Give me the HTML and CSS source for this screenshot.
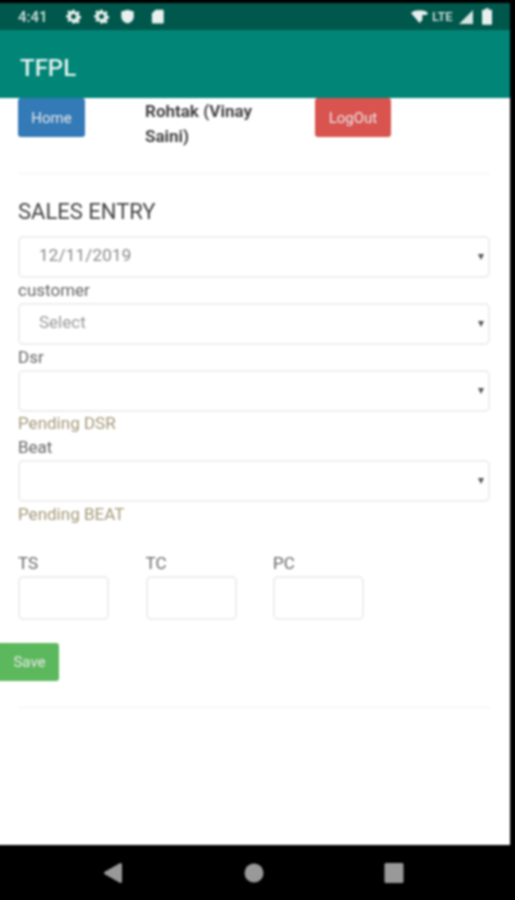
FILE: index.html
```html
<!DOCTYPE html>
<html lang="en">
<head>
    <meta charset="UTF-8">
    <meta name="viewport" content="width=device-width, initial-scale=1.0">
    <title>TFPL</title>
    <link rel="stylesheet" href="styles.css">
</head>
<body>
    <div class="phone">
        <div class="status-bar">
            <span class="status-time">4:41</span>
            <!-- notification icons -->
            <svg class="status-icon gear-one" viewBox="0 0 24 24"><path fill-rule="evenodd" d="M10 1h4l.6 3.2 1.9.8 2.7-1.8 2.8 2.8-1.8 2.7.8 1.9 3.2.6v4l-3.2.6-.8 1.9 1.8 2.7-2.8 2.8-2.7-1.8-1.9.8L14 23h-4l-.6-3.2-1.9-.8-2.7 1.8-2.8-2.8 1.8-2.7-.8-1.9L-.2 14v-4L3 9.4l.8-1.9L2 4.8 4.8 2l2.7 1.8 1.9-.8zM12 8a4 4 0 1 0 0 8 4 4 0 0 0 0-8z"/></svg>
            <svg class="status-icon gear-two" viewBox="0 0 24 24"><path fill-rule="evenodd" d="M10 1h4l.6 3.2 1.9.8 2.7-1.8 2.8 2.8-1.8 2.7.8 1.9 3.2.6v4l-3.2.6-.8 1.9 1.8 2.7-2.8 2.8-2.7-1.8-1.9.8L14 23h-4l-.6-3.2-1.9-.8-2.7 1.8-2.8-2.8 1.8-2.7-.8-1.9L-.2 14v-4L3 9.4l.8-1.9L2 4.8 4.8 2l2.7 1.8 1.9-.8zM12 8a4 4 0 1 0 0 8 4 4 0 0 0 0-8z"/></svg>
            <svg class="status-icon shield" viewBox="0 0 24 24"><path d="M12 1l10 3v8c0 6-4 9.500-10 11C6 21.500 2 18 2 12V4z"/></svg>
            <svg class="status-icon sdcard" viewBox="0 0 24 24"><path d="M9 1h11a2 2 0 0 1 2 2v18a2 2 0 0 1-2 2H5a2 2 0 0 1-2-2V7z"/></svg>
            <span class="status-right">
                <svg class="wifi" viewBox="0 0 24 18"><path d="M0 4C3 1 7 0 12 0s9 1 12 4l-2 3h-6v7l-4 4z"/></svg>
                <span class="lte">LTE</span>
                <svg class="signal" viewBox="0 0 14 14"><path d="M14 0v14H0z"/></svg>
                <svg class="battery" viewBox="0 0 11 18"><path d="M3.500 0h4v1.500H10a1 1 0 0 1 1 1V17a1 1 0 0 1-1 1H1a1 1 0 0 1-1-1V2.500a1 1 0 0 1 1-1h2.500z"/></svg>
            </span>
        </div>
        <div class="app-bar">TFPL</div>

        <div class="content">
            <div class="top-row">
                <div><button class="btn btn-home">Home</button></div>
                <div class="user-name">Rohtak (Vinay Saini)</div>
                <div><button class="btn btn-logout">LogOut</button></div>
            </div>
            <hr class="rule rule-top">

            <h3 class="page-title">SALES ENTRY</h3>

            <div class="select-box"><select class="field-select date-select"><option>12/11/2019</option></select></div>
            <label class="field-label">customer</label>
            <div class="select-box"><select class="field-select"><option>Select</option></select></div>
            <label class="field-label">Dsr</label>
            <div class="select-box"><select class="field-select"><option></option></select></div>
            <p class="pending">Pending DSR</p>
            <label class="field-label">Beat</label>
            <div class="select-box"><select class="field-select"><option></option></select></div>
            <p class="pending pending-beat">Pending BEAT</p>

            <div class="count-row">
                <div class="count-col">
                    <label class="field-label">TS</label>
                    <input type="text" class="count-input">
                </div>
                <div class="count-col">
                    <label class="field-label">TC</label>
                    <input type="text" class="count-input">
                </div>
                <div class="count-col">
                    <label class="field-label">PC</label>
                    <input type="text" class="count-input">
                </div>
            </div>

            <button class="btn btn-save">Save</button>
            <hr class="rule rule-bottom">
        </div>

        <div class="nav-bar">
            <svg class="nav-icon nav-back" viewBox="0 0 20 22"><path d="M17.500 2.500v17L2.500 11z"/></svg>
            <svg class="nav-icon" viewBox="0 0 20 22"><circle cx="10" cy="11" r="9.500"/></svg>
            <svg class="nav-icon" viewBox="0 0 20 22"><rect x="0.500" y="1" width="19" height="20" rx="1.500"/></svg>
        </div>
    </div>
</body>
</html>
```

FILE: styles.css
```css
body {
    margin: 0;
    background-color: #000;
    font-family: Roboto, "Liberation Sans", sans-serif;
}

.phone {
    width: 515px;
    height: 900px;
    display: flex;
    flex-direction: column;
    filter: blur(0.8px);
}

/* status bar */
.status-bar {
    width: 510px;
    height: 27px;
    margin-top: 3px;
    flex-shrink: 0;
    display: flex;
    align-items: center;
    background-color: #00574b;
    box-shadow: -6px 0 0 #00574b; /* keeps the blur from darkening the left edge */
    color: #d5e4e1;
    box-sizing: border-box;
    padding: 0 18px;
}

.status-time {
    font-size: 15px;
    font-weight: 500;
    width: 48px;
}

.status-icon {
    width: 15px;
    height: 15px;
    fill: #e8f0ee;
}

.gear-two {
    margin-left: 13px;
}

.shield {
    margin-left: 11px;
}

.sdcard {
    margin-left: 15px;
}

.status-right {
    margin-left: auto;
    display: flex;
    align-items: center;
}

.wifi {
    width: 17px;
    height: 13px;
    fill: #e8f0ee;
}

.lte {
    font-size: 13px;
    font-weight: 500;
    margin-left: 4px;
    width: 26px;
}

.signal {
    width: 14px;
    height: 14px;
    fill: #d5e4e1;
    margin-left: 1px;
}

.battery {
    width: 10px;
    height: 17px;
    fill: #e8f0ee;
    margin-left: 9px;
}

/* app bar */
.app-bar {
    width: 510px;
    height: 68px;
    flex-shrink: 0;
    background-color: #008577;
    box-shadow: -6px 0 0 #008577;
    color: #e6f2f0;
    font-size: 24px;
    font-weight: 500;
    line-height: 76px;
    box-sizing: border-box;
    padding-left: 20px;
}

/* page */
.content {
    width: 510px;
    height: 747px;
    flex-shrink: 0;
    background-color: #fff;
    box-shadow: -6px 0 0 #fff;
    box-sizing: border-box;
    padding: 0 20px 0 18px;
    color: #555;
    font-size: 17px;
}

.top-row {
    display: grid;
    grid-template-columns: 127px 170px 1fr;
}

.btn {
    border: none;
    border-radius: 3px;
    color: #e8e8e8;
    font-family: inherit;
    font-size: 15px;
    display: block;
    padding: 0;
}

.btn-home {
    width: 67px;
    height: 39px;
    background-color: #337ab7;
}

.btn-logout {
    width: 76px;
    height: 39px;
    background-color: #d9534f;
}

.user-name {
    color: #444;
    font-size: 17px;
    font-weight: 700;
    line-height: 25px;
    padding: 1px 35px 0 0;
}

.rule {
    border: none;
    border-top: 1px solid #f2f2f2;
    margin: 0;
}

.rule-top {
    margin-top: 24px;
}

.page-title {
    margin: 26px 0 12px;
    font-size: 22px;
    font-weight: 400;
    line-height: 24px;
    color: #444;
}

.select-box {
    position: relative;
}

/* small arrow on the right side of the select */
.select-box::after {
    content: "";
    position: absolute;
    right: 6px;
    top: 18px;
    border-left: 3.5px solid transparent;
    border-right: 3.5px solid transparent;
    border-top: 6px solid #555;
}

.field-select {
    display: block;
    width: 100%;
    height: 42px;
    box-sizing: border-box;
    appearance: none;
    background-color: #fff;
    border: 2px solid #eee;
    border-radius: 5px;
    padding: 0 0 4px 19px;
    font-family: inherit;
    font-size: 17px;
    color: #999;
}

.date-select {
    color: #888;
    letter-spacing: 0.2px;
}

.field-label {
    display: block;
    font-size: 17px;
    line-height: 25px;
    color: #666;
}

.pending {
    margin: 0;
    font-size: 17px;
    line-height: 23px;
    color: #a39878;
}

.pending-beat {
    padding-top: 1px;
}

.count-row {
    display: grid;
    grid-template-columns: 127.5px 127.5px 127.5px;
    margin-top: 25px;
}

.count-input {
    display: block;
    width: 91px;
    height: 44px;
    box-sizing: border-box;
    border: 2px solid #eee;
    border-radius: 5px;
    background-color: #fff;
}

.btn-save {
    width: 59px;
    height: 38px;
    margin: 23px 0 0 -18px;
    background-color: #5cb85c;
    box-shadow: -6px 0 0 #5cb85c;
}

.rule-bottom {
    margin-top: 26px;
}

/* android nav */
.nav-bar {
    flex-grow: 1;
    width: 510px;
    display: grid;
    grid-template-columns: 103px 20px 121px 20px 120px 20px;
    align-items: center;
}

.nav-icon {
    width: 20px;
    height: 22px;
    fill: #999;
    grid-row: 1;
}

.nav-back {
    stroke: #999;
    stroke-width: 3;
    stroke-linejoin: round;
}

.nav-icon:nth-child(1) {
    grid-column: 2;
}

.nav-icon:nth-child(2) {
    grid-column: 4;
}

.nav-icon:nth-child(3) {
    grid-column: 6;
}
```
